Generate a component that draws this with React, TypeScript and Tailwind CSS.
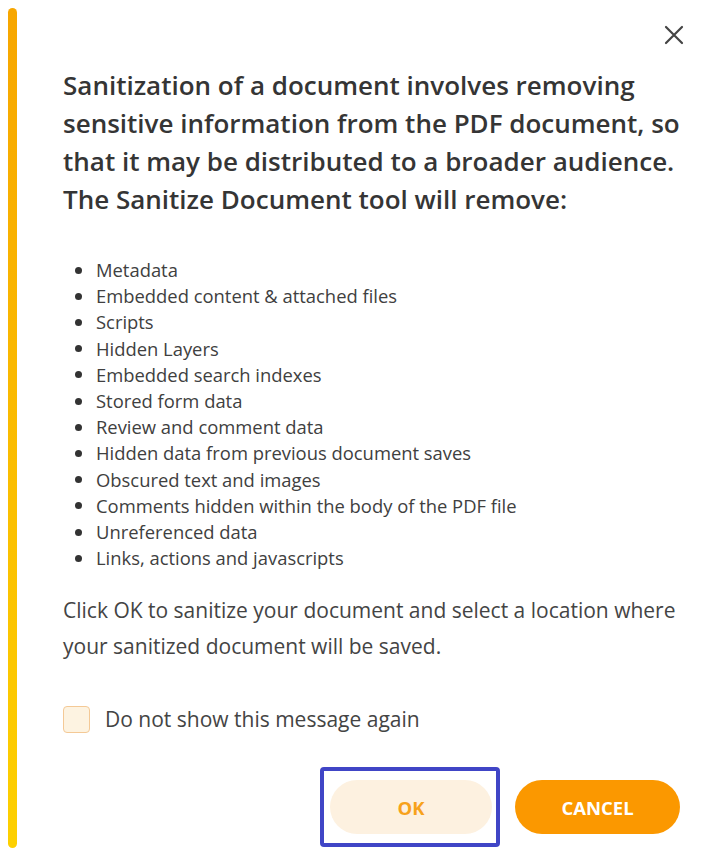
const items = [
  "Metadata",
  "Embedded content & attached files",
  "Scripts",
  "Hidden Layers",
  "Embedded search indexes",
  "Stored form data",
  "Review and comment data",
  "Hidden data from previous document saves",
  "Obscured text and images",
  "Comments hidden within the body of the PDF file",
  "Unreferenced data",
  "Links, actions and javascripts",
];

export default function App() {
  return (
    <div
      className="flex h-[856px] w-[702px] bg-white text-[#3a3a3a]"
      style={{ fontFamily: '"Open Sans", "Noto Sans", sans-serif' }}
    >
      <div className="py-2 pl-2">
        <div className="h-full w-[9px] rounded-full bg-gradient-to-b from-[#f7a600] to-[#fdd000]" />
      </div>

      <div className="flex flex-1 flex-col pl-[46px]">
        <div className="flex justify-end pr-[18px] pt-[25px]">
          <button className="text-[#444]">
            <svg width="20" height="20" viewBox="0 0 20 20" fill="none" stroke="currentColor" strokeWidth="2.2" strokeLinecap="round">
              <path d="M2 2L18 18M18 2L2 18" />
            </svg>
          </button>
        </div>

        <h1 className="mt-[21px] text-[26px] font-semibold leading-[38px] text-[#353535]">
          Sanitization of a document involves removing sensitive information from the PDF document, so
          that it may be distributed to a broader audience. The Sanitize Document tool will remove:
        </h1>

        <ul className="mt-[39px] flex flex-col text-[18.4px] leading-[26.2px] text-[#404040]">
          {items.map((item) => (
            <li key={item} className="flex items-center">
              <span className="ml-[12px] mr-[14px] h-[7px] w-[7px] rounded-full bg-[#333]" />
              {item}
            </li>
          ))}
        </ul>

        <p className="mt-[21px] pr-[4px] text-[21px] leading-[36px] text-[#444]">
          Click OK to sanitize your document and select a location where your sanitized document will be
          saved.
        </p>

        <label className="mt-[42px] flex items-center gap-[15px] text-[21px] leading-[27px] text-[#444]">
          <span className="h-[27px] w-[27px] rounded-[4px] border border-[#f4c996] bg-[#fdf3e1]" />
          Do not show this message again
        </label>

        <div className="mt-[34px] flex items-center justify-end gap-[15px] pr-[22px]">
          <div className="rounded-[4px] border-[4px] border-[#4045c6] py-[9px] pl-[6px] pr-[4px]">
            <button className="h-[54px] w-[162px] rounded-full bg-[#fdf1e0] text-[18.5px] font-bold text-[#f7a21b]">
              OK
            </button>
          </div>
          <button className="h-[54px] w-[165px] rounded-full bg-[#fb9800] text-[18.5px] font-bold text-white">
            CANCEL
          </button>
        </div>
      </div>
    </div>
  );
}
